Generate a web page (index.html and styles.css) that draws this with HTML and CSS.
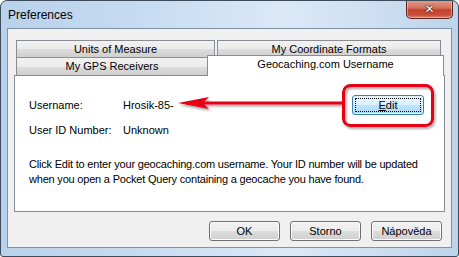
FILE: index.html
```html
<!DOCTYPE html>
<html>
<head>
<meta charset="utf-8">
<link rel="stylesheet" href="styles.css">
</head>
<body>
<div class="window">
  <div class="titlebar">
    <span class="title">Preferences</span>
    <div class="close"><span class="x">✕</span></div>
  </div>
  <div class="client">
    <div class="tabs">
      <div class="tabrow row1">
        <div class="tab t-units">Units of Measure</div>
        <div class="tab t-coord">My Coordinate Formats</div>
      </div>
      <div class="tabrow row2">
        <div class="tab t-gps">My GPS Receivers</div>
        <div class="tab t-geo selected">Geocaching.com Username</div>
      </div>
    </div>
    <div class="panel">
      <div class="row first">
        <span class="label">Username:</span>
        <span class="value">Hrosik-85-</span>
        <div class="btn edit"><span class="focus"><u>E</u>dit</span></div>
      </div>
      <div class="row second">
        <span class="label">User ID Number:</span>
        <span class="value">Unknown</span>
      </div>
      <p class="info">Click Edit to enter your geocaching.com username. Your ID number will be updated<br>when you open a Pocket Query containing a geocache you have found.</p>
    </div>
    <div class="buttons">
      <div class="btn">OK</div>
      <div class="btn">Storno</div>
      <div class="btn">Nápověda</div>
    </div>
  </div>
  <svg class="annot" width="459" height="257" viewBox="0 0 459 257">
    <defs>
      <filter id="sh" x="-20%" y="-20%" width="140%" height="160%">
        <feDropShadow dx="1.5" dy="2" stdDeviation="1.2" flood-color="#000" flood-opacity="0.35"/>
      </filter>
    </defs>
    <g filter="url(#sh)">
      <rect x="343.5" y="85.5" width="89" height="40" rx="7" ry="7" fill="none" stroke="#e60012" stroke-width="3"/>
      <line x1="200" y1="103" x2="343" y2="103" stroke="#e60012" stroke-width="3"/>
      <polygon points="178,103 209,97 203,103 209,109" fill="#e60012"/>
    </g>
  </svg>
</div>
</body>
</html>
```
FILE: styles.css
```css
html, body {
  margin: 0;
  padding: 0;
  background: #ffffff;
}
body {
  font-family: "Liberation Sans", Arial, sans-serif;
  font-size: 11px;
  color: #000;
}
.window {
  position: relative;
  width: 459px;
  height: 257px;
  box-sizing: border-box;
  border: 1px solid #3d4c5d;
  border-radius: 7px 7px 3px 3px;
  background: linear-gradient(to right, #b9d1ea 0%, #c6dbf1 30%, #dbe9f7 62%, #cfe0f2 80%, #bcd3eb 100%);
  display: flex;
  flex-direction: column;
  overflow: hidden;
}
.titlebar {
  height: 27px;
  display: flex;
  align-items: flex-start;
}
.title {
  font-family: "Liberation Sans", Arial, sans-serif;
  font-size: 12px;
  padding-left: 7px;
  padding-top: 7px;
  color: #000;
}
.close {
  margin-left: auto;
  margin-right: 5px;
  margin-top: -1px;
  width: 47px;
  height: 19px;
  box-sizing: border-box;
  border: 1px solid #5a2420;
  border-top: none;
  border-radius: 0 0 5px 5px;
  background: linear-gradient(#e3a08f 0%, #d2705c 45%, #c3412b 55%, #c9503a 85%, #dc8c70 100%);
  box-shadow: inset 0 0 0 1px rgba(255,220,210,0.45);
  display: flex;
  align-items: center;
  justify-content: center;
}
.x {
  color: #fff;
  font-family: "DejaVu Sans", sans-serif;
  font-weight: bold;
  font-size: 12px;
  line-height: 12px;
  text-shadow: 0 0 1px #3a1510, 0 0 1px #3a1510, 0 0 2px #3a1510;
}
.client {
  margin: 0 6px;
  height: 220px;
  box-sizing: border-box;
  border: 1px solid #7f93a8;
  background: #f0f0f0;
  display: flex;
  flex-direction: column;
}
.tabs {
  margin-left: 8px;
  margin-top: 11px;
}
.tabrow {
  display: flex;
}
.row1 {
  gap: 2px;
  height: 17px;
}
.row2 {
  height: 18px;
  align-items: flex-start;
}
.tab {
  box-sizing: border-box;
  border: 1px solid #898c95;
  border-bottom: none;
  background: linear-gradient(#f2f2f2 0%, #ebebeb 50%, #dddddd 51%, #cfcfcf 100%);
  text-align: center;
  line-height: 16px;
  height: 100%;
}
.t-units { width: 199px; }
.t-coord { width: 224px; }
.t-gps { width: 192px; line-height: 17px; }
.selected {
  position: relative;
  z-index: 2;
  width: 237px;
  margin-left: -1px;
  margin-top: -2px;
  height: 21px;
  background: #ffffff;
  line-height: 17px;
}
.panel {
  margin-left: 6px;
  width: 431px;
  height: 137px;
  box-sizing: border-box;
  border: 1px solid #898c95;
  background: #ffffff;
  padding: 19px 20px 0 14px;
}
.row {
  display: flex;
  align-items: center;
}
.row.first { height: 20px; }
.row.second { height: 14px; margin-top: 8px; }
.label {
  width: 94px;
}
.btn {
  width: 71px;
  height: 20px;
  box-sizing: border-box;
  border: 1px solid #707070;
  border-radius: 3px;
  background: linear-gradient(#f2f2f2 0%, #ebebeb 50%, #dddddd 51%, #cfcfcf 100%);
  box-shadow: inset 0 0 0 1px #fcfcfc;
  display: flex;
  align-items: center;
  justify-content: center;
}
.edit {
  margin-left: auto;
  width: 72px;
  border-color: #3c7fb1;
  background: linear-gradient(#eaf6fd 0%, #d9f0fc 50%, #bee6fd 51%, #a7d9f5 100%);
  box-shadow: inset 0 0 0 1px #e0f2fc;
}
.focus {
  box-sizing: border-box;
  width: 66px;
  height: 14px;
  border: 1px dotted #000;
  display: flex;
  align-items: center;
  justify-content: center;
}
.info {
  margin: 20px -10px 0 0;
  line-height: 15px;
  letter-spacing: -0.2px;
  white-space: nowrap;
}
.buttons {
  display: flex;
  justify-content: flex-end;
  gap: 10px;
  margin-top: 9px;
  padding-right: 9px;
}
.annot {
  position: absolute;
  left: -1px;
  top: -1px;
  pointer-events: none;
}
```
